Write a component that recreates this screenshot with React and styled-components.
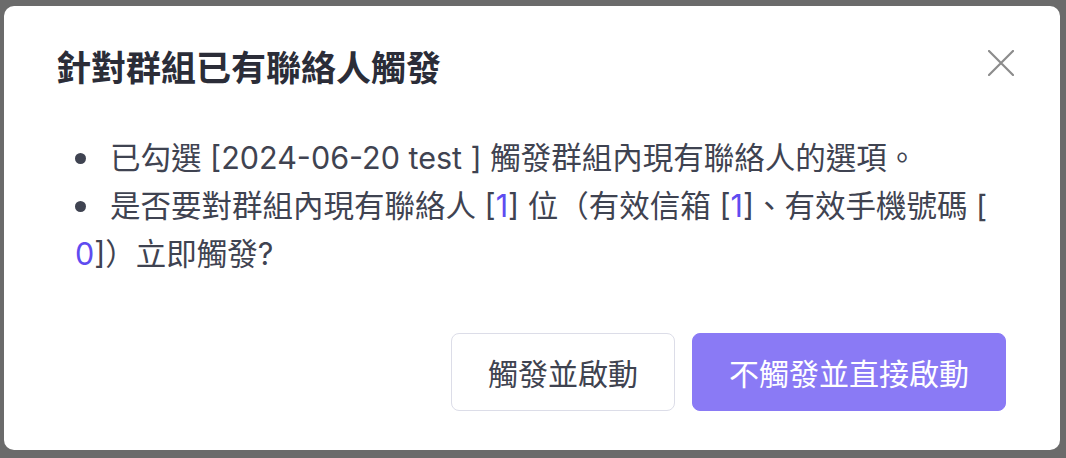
import React from 'react';
import styled, { createGlobalStyle } from 'styled-components';

const GlobalStyle = createGlobalStyle`
  html, body {
    margin: 0;
    padding: 0;
    background: #6b6b6b;
  }
  * {
    box-sizing: border-box;
  }
`;

const Overlay = styled.div`
  width: 1066px;
  height: 458px;
  padding: 6px 6px 8px 4px;
  background: #6b6b6b;
  font-family: "Inter", "Noto Sans CJK TC", sans-serif;
`;

const Modal = styled.div`
  width: 1056px;
  height: 444px;
  background: #fff;
  border-radius: 10px;
  padding: 40px 54px 39px 52px;
  display: flex;
  flex-direction: column;
`;

const Header = styled.div`
  display: flex;
  justify-content: space-between;
  align-items: flex-start;
`;

const Title = styled.h2`
  margin: 0;
  font-size: 35px;
  line-height: 40px;
  font-weight: 700;
  color: #2b2d38;
  font-family: "Noto Sans CJK TC", sans-serif;
`;

const CloseButton = styled.button`
  width: 26px;
  height: 26px;
  margin: 4px -8px 0 0;
  padding: 0;
  border: none;
  background: none;
  cursor: pointer;
  display: flex;
`;

const List = styled.ul`
  list-style: none;
  margin: 48px 0 0;
  padding: 0 0 0 19px;
`;

const Item = styled.li`
  font-size: 30.5px;
  line-height: 48px;
  color: #3f4351;
  white-space: nowrap;

  &::before {
    content: "";
    display: inline-block;
    width: 11px;
    height: 11px;
    border-radius: 50%;
    background: #3f4351;
    margin-right: 24px;
    vertical-align: middle;
    position: relative;
    top: -2px;
  }
`;

const Count = styled.span`
  color: #5e4cf0;
`;

const Footer = styled.div`
  margin-top: 55px;
  display: flex;
  justify-content: flex-end;
  gap: 17px;
`;

const Button = styled.button`
  height: 78px;
  padding: 0 36px;
  font-family: "Noto Sans CJK TC", sans-serif;
  font-size: 30px;
  border-radius: 8px;
  cursor: pointer;
  border: 1px solid ${(p) => (p.$primary ? '#8a7af5' : '#dcdde8')};
  background: ${(p) => (p.$primary ? '#8a7af5' : '#fff')};
  color: ${(p) => (p.$primary ? '#fff' : '#3f4350')};
`;

export default function App() {
  return (
    <>
      <GlobalStyle />
      <Overlay>
        <Modal>
          <Header>
            <Title>針對群組已有聯絡人觸發</Title>
            <CloseButton aria-label="close">
              <svg width="26" height="26" viewBox="0 0 26 26">
                <path d="M1 1 L25 25 M25 1 L1 25" stroke="#8c8c8c" strokeWidth="2.2" strokeLinecap="round" />
              </svg>
            </CloseButton>
          </Header>
          <List>
            <Item>已勾選 [2024-06-20 test ] 觸發群組內現有聯絡人的選項。</Item>
            <Item>
              是否要對群組內現有聯絡人 [<Count>1</Count>] 位（有效信箱 [<Count>1</Count>]、有效手機號碼 [
              <br />
              <Count>0</Count>]）立即觸發?
            </Item>
          </List>
          <Footer>
            <Button>觸發並啟動</Button>
            <Button $primary>不觸發並直接啟動</Button>
          </Footer>
        </Modal>
      </Overlay>
    </>
  );
}
